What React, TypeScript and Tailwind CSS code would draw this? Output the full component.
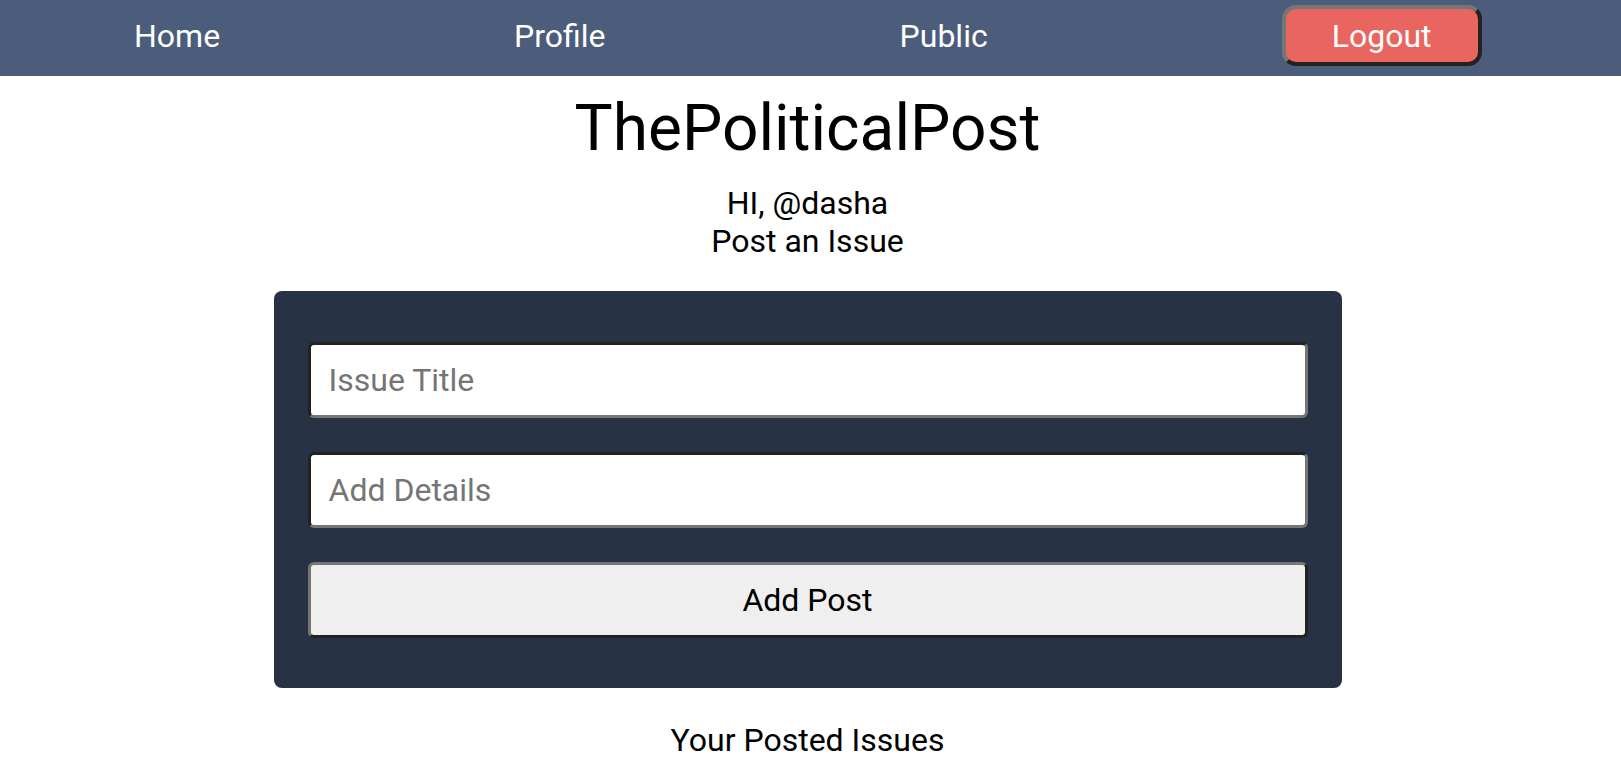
import React from "react";

const navLinks = ["Home", "Profile", "Public"];

const App: React.FC = () => {
  return (
    <div className="min-h-screen bg-white font-['Roboto',sans-serif] text-black">
      <nav className="flex h-[76px] items-center gap-[294px] bg-[#4b5d7b] pb-[5px] pl-[134px] text-[32px] text-white">
        {navLinks.map((link) => (
          <a key={link} href="#" className="leading-none">
            {link}
          </a>
        ))}
        <button className="h-[61px] w-[200px] rounded-[14px] border-[4px] border-t-[#767676] border-l-[#767676] border-b-[#222] border-r-[#222] bg-[#e8665f] text-[32px] text-white">
          Logout
        </button>
      </nav>

      <main className="pr-[6px]">
        <h1 className="mt-[15px] text-center text-[64px] leading-[75px]">
          ThePoliticalPost
        </h1>
        <div className="mt-[18px] text-center text-[32px] leading-[38px]">
          <p>HI, @dasha</p>
          <p>Post an Issue</p>
        </div>

        <form
          className="mx-auto mt-[31px] flex w-[1068px] flex-col gap-[34px] rounded-lg bg-[#273244] px-[34px] pt-[51px] pb-[50px]"
          onSubmit={(e) => e.preventDefault()}
        >
          <input
            type="text"
            placeholder="Issue Title"
            className="h-[76px] w-full rounded-[6px] border-[3px] border-t-[#222] border-l-[#222] border-b-[#767676] border-r-[#767676] bg-white px-[18px] text-[32px] outline-none placeholder:text-[#757575]"
          />
          <input
            type="text"
            placeholder="Add Details"
            className="h-[76px] w-full rounded-[6px] border-[3px] border-t-[#222] border-l-[#222] border-b-[#767676] border-r-[#767676] bg-white px-[18px] text-[32px] outline-none placeholder:text-[#757575]"
          />
          <button
            type="submit"
            className="h-[76px] w-full rounded-[6px] border-[3px] border-t-[#767676] border-l-[#767676] border-b-[#222] border-r-[#222] bg-[#efefef] text-[32px] text-black"
          >
            Add Post
          </button>
        </form>

        <h2 className="mt-[33px] text-center text-[32px] leading-[38px]">
          Your Posted Issues
        </h2>
      </main>
    </div>
  );
};

export default App;
